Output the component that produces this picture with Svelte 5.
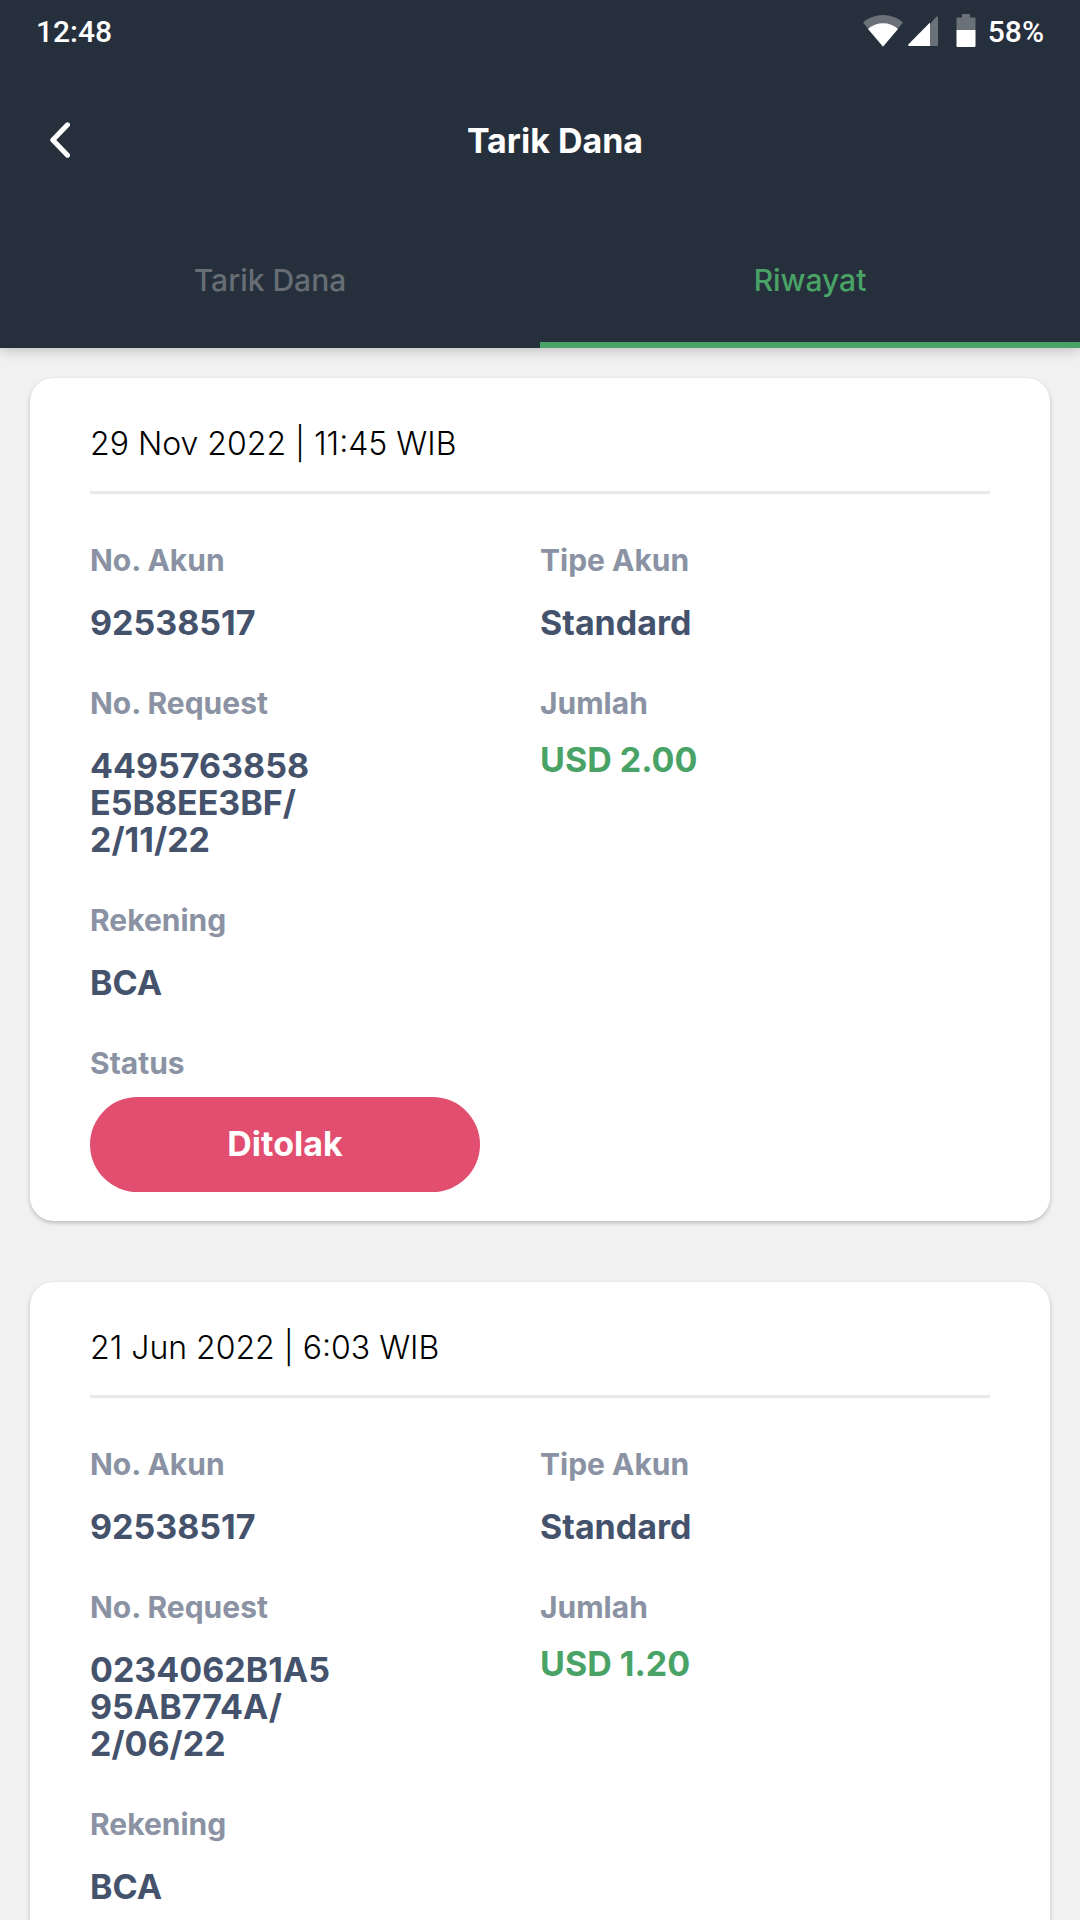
<script lang="ts">
    type Withdrawal = {
        date: string;
        account: string;
        type: string;
        request: string;
        amount: string;
        bank: string;
        status?: string;
    };

    const tabs = ['Tarik Dana', 'Riwayat'];
    let activeTab = $state('Riwayat');

    const history: Withdrawal[] = [
        {
            date: '29 Nov 2022 | 11:45 WIB',
            account: '92538517',
            type: 'Standard',
            request: '4495763858\nE5B8EE3BF/\n2/11/22',
            amount: 'USD 2.00',
            bank: 'BCA',
            status: 'Ditolak'
        },
        {
            date: '21 Jun 2022 | 6:03 WIB',
            account: '92538517',
            type: 'Standard',
            request: '0234062B1A5\n95AB774A/\n2/06/22',
            amount: 'USD 1.20',
            bank: 'BCA'
        }
    ];
</script>

<div class="screen">
    <header>
        <div class="status-bar">
            <span>12:48</span>
            <div class="indicators">
                <svg class="wifi" width="40" height="32" viewBox="0 0 40 32">
                    <path d="M0 7.500C5.500 2.800 12.500 0 20 0s14.500 2.800 20 7.500L20 32z" fill="#6a7178" />
                    <path d="M5 14C9.200 10.300 14.300 8.300 20 8.300S30.800 10.300 35 14L20 31.500z" fill="#fff" />
                </svg>
                <svg class="signal" width="30" height="30" viewBox="0 0 30 30">
                    <path d="M22 8L28.500 0.500Q30 0 30 1.500V29q0 1-1 1h-7z" fill="#6a7178" />
                    <path d="M22 6.500V30H1q-1.500-.5-.5-1.800z" fill="#fff" />
                </svg>
                <svg class="battery" width="20" height="34" viewBox="0 0 20 34">
                    <path d="M6 0h8v3.500h4.500q1 0 1 1V16H.5V4.500q0-1 1-1H6z" fill="#6a7178" />
                    <path d="M.5 16h19v16q0 1-1 1h-17q-1 0-1-1z" fill="#fff" />
                </svg>
                <span>58%</span>
            </div>
        </div>

        <div class="app-bar">
            <button class="back" aria-label="Kembali">
                <svg width="20" height="36" viewBox="0 0 20 36">
                    <path d="M17.500 2.800L2.800 18l14.700 15.200" fill="none" stroke="#fff" stroke-width="5" stroke-linecap="round" stroke-linejoin="round" />
                </svg>
            </button>
            <h1>Tarik Dana</h1>
        </div>

        <nav class="tabs">
            {#each tabs as tab}
                <button class="tab" class:active={activeTab === tab} onclick={() => (activeTab = tab)}>
                    {tab}
                </button>
            {/each}
        </nav>
    </header>

    <main>
        {#each history as item}
            <article class="card">
                <p class="date">{item.date}</p>
                <hr />
                <dl>
                    <div class="field">
                        <dt>No. Akun</dt>
                        <dd>{item.account}</dd>
                    </div>
                    <div class="field">
                        <dt>Tipe Akun</dt>
                        <dd>{item.type}</dd>
                    </div>
                    <div class="field">
                        <dt>No. Request</dt>
                        <dd>{item.request}</dd>
                    </div>
                    <div class="field">
                        <dt>Jumlah</dt>
                        <dd class="amount">{item.amount}</dd>
                    </div>
                    <div class="field">
                        <dt>Rekening</dt>
                        <dd>{item.bank}</dd>
                    </div>
                </dl>
                {#if item.status}
                    <div class="status">
                        <span class="status-label">Status</span>
                        <span class="pill">{item.status}</span>
                    </div>
                {/if}
            </article>
        {/each}
    </main>
</div>

<style>
    :global(body) {
        background: #f1f1f1;
    }

    .screen {
        display: flex;
        flex-direction: column;
        height: 100vh;
        font-family: Inter, "Open Sans", sans-serif;
    }

    header {
        position: relative;
        flex: none;
        background: #26303c;
        color: #fff;
        box-shadow: 0 3px 12px rgba(0, 0, 0, 0.2);
    }

    .status-bar {
        display: flex;
        justify-content: space-between;
        align-items: center;
        height: 62px;
        padding: 0 36px;
        font-family: Roboto, sans-serif;
        font-size: 30px;
        font-weight: 500;
    }

    .indicators {
        display: flex;
        align-items: center;
    }

    .signal {
        margin-left: 5px;
    }

    .battery {
        margin: 0 12px 0 18px;
    }

    .app-bar {
        display: grid;
        grid-template-columns: 90px 1fr 60px;
        align-items: center;
        height: 156px;
    }

    button {
        border: none;
        background: none;
        font-family: inherit;
        cursor: pointer;
    }

    .back {
        display: flex;
        justify-content: flex-end;
        padding: 20px;
    }

    h1 {
        margin: 0;
        font-size: 34px;
        font-weight: 700;
        text-align: center;
    }

    .tabs {
        display: grid;
        grid-template-columns: 1fr 1fr;
    }

    .tab {
        height: 130px;
        padding: 0;
        border-bottom: 6px solid transparent;
        color: #666d74;
        font-size: 30px;
        font-weight: 500;
    }

    .tab.active {
        border-bottom-color: #4aa366;
        color: #4aa366;
    }

    main {
        flex: 1;
        display: flex;
        flex-direction: column;
        gap: 61px;
        padding: 30px;
        overflow-y: auto;
        scrollbar-width: none;
    }

    .card {
        flex: none;
        padding: 47px 60px 29px;
        border-radius: 24px;
        background: #fff;
        box-shadow: 0 2px 4px rgba(0, 0, 0, 0.22);
    }

    .date {
        margin: 0;
        color: #000;
        font-size: 32px;
        font-weight: 300;
        line-height: 37px;
    }

    hr {
        height: 3px;
        margin: 29px 0 50px;
        border: none;
        background: #e9e9e9;
    }

    dl {
        display: grid;
        grid-template-columns: 1fr 1fr;
        margin: 0;
    }

    .field {
        padding-bottom: 46px;
    }

    dt,
    .status-label {
        display: block;
        color: #8a92a3;
        font-size: 30px;
        font-weight: 700;
        line-height: 32px;
    }

    dd {
        margin: 28px 0 0;
        color: #44526c;
        font-size: 34px;
        font-weight: 700;
        line-height: 37px;
        white-space: pre-line;
    }

    .amount {
        margin-top: 22px;
        color: #4aa366;
    }

    .pill {
        display: block;
        box-sizing: border-box;
        width: 390px;
        margin-top: 18px;
        padding: 28px 0 30px;
        border-radius: 48px;
        background: #e24e6f;
        color: #fff;
        font-size: 34px;
        font-weight: 700;
        line-height: 37px;
        text-align: center;
    }
</style>
